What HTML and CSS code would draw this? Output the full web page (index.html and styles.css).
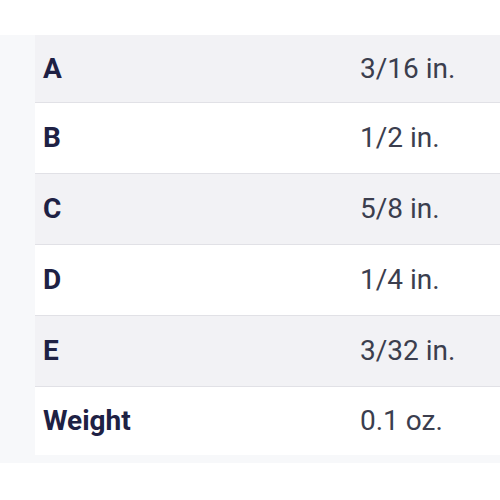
FILE: index.html
```html
<!DOCTYPE html>
<html>
<head>
<meta charset="utf-8">
<link rel="stylesheet" href="styles.css">
</head>
<body>
<div class="page">
  <div class="panel">
    <table class="specs">
      <tr><th>A</th><td>3/16 in.</td></tr>
      <tr><th>B</th><td>1/2 in.</td></tr>
      <tr><th>C</th><td>5/8 in.</td></tr>
      <tr><th>D</th><td>1/4 in.</td></tr>
      <tr><th>E</th><td>3/32 in.</td></tr>
      <tr><th>Weight</th><td>0.1 oz.</td></tr>
    </table>
  </div>
</div>
</body>
</html>
```
FILE: styles.css
```css
html, body {
  margin: 0;
  padding: 0;
  background: #ffffff;
}
.page {
  padding-top: 35px;
  width: 500px;
  height: 500px;
  box-sizing: border-box;
}
.panel {
  background: #f7f8fa;
  padding: 0 0 8px 35px;
}
.specs {
  width: 100%;
  border-collapse: collapse;
  font-family: Roboto, "Liberation Sans", sans-serif;
  font-size: 28px;
}
.specs tr {
  height: 71px;
  background: #ffffff;
}
.specs tr:first-child {
  height: 67px;
}
.specs tr:last-child {
  height: 69px;
}
.specs tr:nth-child(odd) {
  background: #f2f2f5;
}
.specs tr + tr {
  border-top: 1px solid #e1e1e6;
}
.specs th {
  text-align: left;
  font-weight: 700;
  color: #1e2144;
  padding: 0 0 0 8px;
  width: 317px;
}
.specs td {
  color: #3b3e4e;
  padding: 0;
}
```
